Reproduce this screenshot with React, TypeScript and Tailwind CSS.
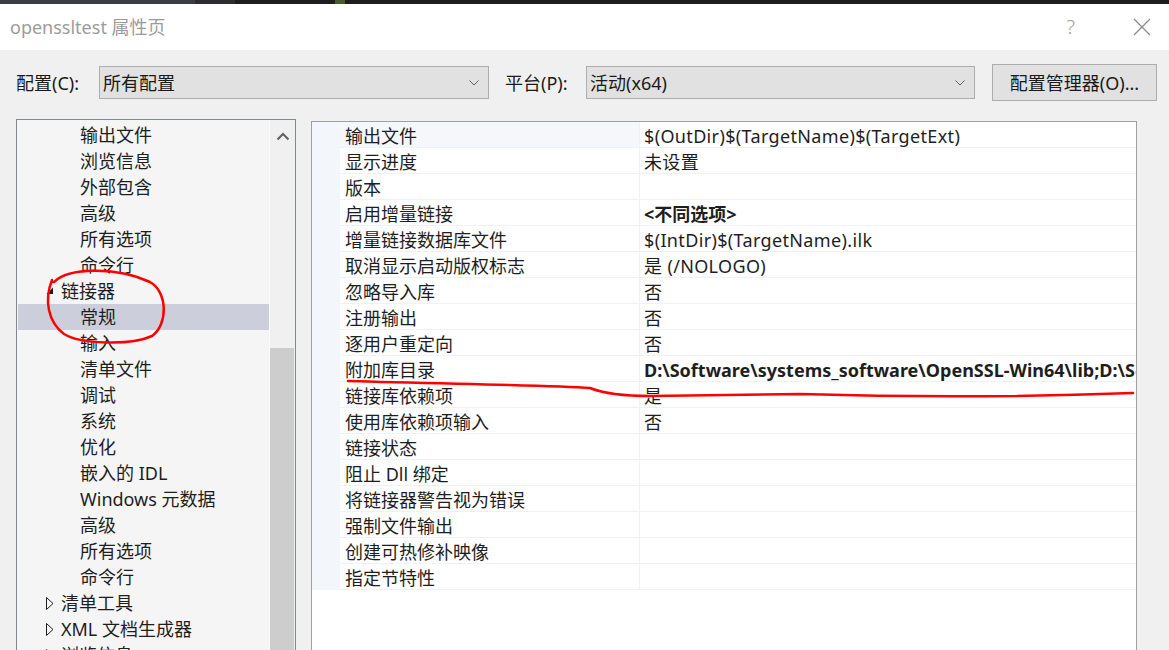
import React from "react";

const FONT = { fontFamily: '"Noto Sans", "Noto Sans CJK SC", sans-serif' };

type TreeItem = { label: string; level: 0 | 1; state?: "open" | "closed"; selected?: boolean };

const tree: TreeItem[] = [
  { label: "输出文件", level: 1 },
  { label: "浏览信息", level: 1 },
  { label: "外部包含", level: 1 },
  { label: "高级", level: 1 },
  { label: "所有选项", level: 1 },
  { label: "命令行", level: 1 },
  { label: "链接器", level: 0, state: "open" },
  { label: "常规", level: 1, selected: true },
  { label: "输入", level: 1 },
  { label: "清单文件", level: 1 },
  { label: "调试", level: 1 },
  { label: "系统", level: 1 },
  { label: "优化", level: 1 },
  { label: "嵌入的 IDL", level: 1 },
  { label: "Windows 元数据", level: 1 },
  { label: "高级", level: 1 },
  { label: "所有选项", level: 1 },
  { label: "命令行", level: 1 },
  { label: "清单工具", level: 0, state: "closed" },
  { label: "XML 文档生成器", level: 0, state: "closed" },
  { label: "浏览信息", level: 0, state: "closed" },
];

type Prop = { name: string; value?: string; bold?: boolean };
const props: Prop[] = [
  { name: "输出文件", value: "$(OutDir)$(TargetName)$(TargetExt)" },
  { name: "显示进度", value: "未设置" },
  { name: "版本" },
  { name: "启用增量链接", value: "<不同选项>", bold: true },
  { name: "增量链接数据库文件", value: "$(IntDir)$(TargetName).ilk" },
  { name: "取消显示启动版权标志", value: "是 (/NOLOGO)" },
  { name: "忽略导入库", value: "否" },
  { name: "注册输出", value: "否" },
  { name: "逐用户重定向", value: "否" },
  {
    name: "附加库目录",
    value: "D:\\Software\\systems_software\\OpenSSL-Win64\\lib;D:\\Software\\systems_software\\OpenSSL-Win64\\include",
    bold: true,
  },
  { name: "链接库依赖项", value: "是" },
  { name: "使用库依赖项输入", value: "否" },
  { name: "链接状态" },
  { name: "阻止 Dll 绑定" },
  { name: "将链接器警告视为错误" },
  { name: "强制文件输出" },
  { name: "创建可热修补映像" },
  { name: "指定节特性" },
];

function Chevron() {
  return (
    <svg width="12" height="8" viewBox="0 0 12 8" className="text-[#606060]">
      <path d="M1.5 1.5 L6 6 L10.5 1.5" fill="none" stroke="currentColor" strokeWidth="1" />
    </svg>
  );
}

function Select({ text, w }: { text: string; w: string }) {
  return (
    <div className={`${w} h-[33px] bg-[#e1e1e1] border border-[#adadad] flex items-center pl-[3px] pr-[8px]`}>
      <span className="flex-1 text-[18px] text-[#1a1a1a] leading-none">{text}</span>
      <Chevron />
    </div>
  );
}

export default function App() {
  return (
    <div className="w-[1169px] h-[650px] overflow-hidden bg-[#f0f0f0] relative flex flex-col" style={FONT}>
      {/* dark strip of window behind */}
      <div className="h-[4px] flex shrink-0">
        <div className="w-[195px] bg-[#3c3c44]" />
        <div className="w-[40px] bg-[#2d2d30]" />
        <div className="w-[100px] bg-[#1e1e1e]" />
        <div className="w-[10px] bg-[#4a5a2a]" />
        <div className="flex-1 bg-[#1e1e1e]" />
      </div>

      {/* title bar */}
      <div className="h-[46px] bg-white flex items-center shrink-0">
        <span className="pl-[10px] text-[18px] text-[#9b9b9b] leading-none flex-1">openssltest 属性页</span>
        <span className="text-[20px] text-[#a0a0a0] leading-none mr-[58px] font-light">?</span>
        <svg width="18" height="18" viewBox="0 0 18 18" className="mr-[18px]">
          <path d="M1 1 L17 17 M17 1 L1 17" stroke="#8a8a8a" strokeWidth="1.2" />
        </svg>
      </div>

      {/* config row */}
      <div className="flex items-center h-[37px] mt-[14px] shrink-0 text-[#1a1a1a]">
        <span className="ml-[16px] w-[83px] text-[18px] leading-none">配置(C):</span>
        <Select text="所有配置" w="w-[390px]" />
        <span className="ml-[16px] w-[81px] text-[18px] leading-none">平台(P):</span>
        <Select text="活动(x64)" w="w-[389px]" />
        <div className="ml-[17px] w-[165px] h-[37px] bg-[#e1e1e1] border border-[#adadad] flex items-center justify-center text-[18px] leading-none">
          配置管理器(O)...
        </div>
      </div>

      {/* panels */}
      <div className="flex items-start mt-[18px] flex-1 min-h-0">
        {/* tree */}
        <div className="ml-[16px] w-[280px] h-[560px] border border-[#828790] flex bg-[#f5f5f5]">
          <div className="flex-1 pt-[2px] pl-[1px] text-[#1e1e1e]">
            {tree.map((t, i) => (
              <div
                key={i}
                className={`h-[26px] flex items-center text-[18px] leading-none ${t.selected ? "bg-[#cccedb]" : ""}`}
              >
                {t.level === 0 ? (
                  <>
                    <span className="w-[36px] flex justify-end">
                      {t.state === "open" ? (
                        <svg width="8" height="8" viewBox="0 0 8 8">
                          <path d="M7 0.5 L7 7 L0.5 7 Z" fill="#1e1e1e" />
                        </svg>
                      ) : (
                        <svg width="8" height="13" viewBox="0 0 8 13">
                          <path d="M0.5 0.5 L7 6.5 L0.5 12.5 Z" fill="none" stroke="#1e1e1e" strokeWidth="1" />
                        </svg>
                      )}
                    </span>
                    <span className="pl-[7px]">{t.label}</span>
                  </>
                ) : (
                  <span className="pl-[62px]">{t.label}</span>
                )}
              </div>
            ))}
          </div>
          {/* scrollbar */}
          <div className="w-[26px] h-full border-l border-[#fafafa] bg-[#f0f0f0] flex flex-col">
            <div className="h-[32px] flex items-center justify-center">
              <svg width="14" height="9" viewBox="0 0 14 9">
                <path d="M1.5 7.5 L7 2 L12.5 7.5" fill="none" stroke="#606060" strokeWidth="2" />
              </svg>
            </div>
            <div className="h-[196px]" />
            <div className="flex-1 bg-[#cdcdcd] mr-[1px]" />
          </div>
        </div>

        {/* property grid */}
        <div className="ml-[15px] mt-[2px] w-[826px] h-[560px] border border-[#a0a0a0] bg-white">
          {props.map((p, i) => (
            <div key={i} className="h-[26px] flex text-[18px] leading-none text-[#1e1e1e]">
              <div className="w-[28px] bg-[#f3f6fb]" />
              <div
                className={`w-[299px] flex items-center pl-[5px] pt-[2px] border-b border-[#eef1f6] ${i === 0 ? "bg-[#f5f7fb]" : ""}`}
              >
                {p.name}
              </div>
              <div className="flex-1 min-w-0 flex items-center pl-[4px] pt-[2px] border-l border-b border-[#eef1f6] overflow-hidden whitespace-nowrap">
                <span className={p.bold ? "font-bold" : "tracking-[0.35px]"}>{p.value ?? ""}</span>
              </div>
            </div>
          ))}
        </div>
      </div>

      {/* red annotations */}
      <svg className="absolute left-0 top-0 pointer-events-none" width="1169" height="650" viewBox="0 0 1169 650">
        <path
          d="M54 282 C 70 266, 120 268, 150 282 C 168 292, 168 325, 152 336 C 130 346, 80 344, 64 334 C 48 322, 44 300, 52 280"
          fill="none"
          stroke="#ff0000"
          strokeWidth="2.5"
          strokeLinecap="round"
        />
        <path
          d="M348 381 C 450 384, 550 385, 590 388 C 600 392, 620 396, 650 396 L 800 394 C 900 397, 1000 398, 1133 393"
          fill="none"
          stroke="#ff0000"
          strokeWidth="2.5"
          strokeLinecap="round"
        />
      </svg>
    </div>
  );
}
